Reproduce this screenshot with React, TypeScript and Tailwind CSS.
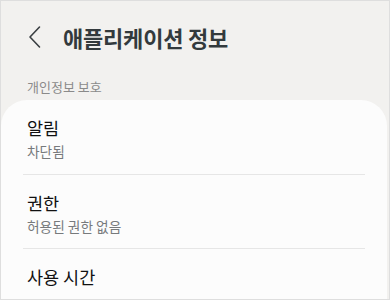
export default function App() {
  const font = { fontFamily: '"Noto Sans CJK KR", "Noto Sans", sans-serif' };
  return (
    <div style={font} className="w-[390px] h-[300px] overflow-hidden border border-[#dedede] bg-[#f2f1ef] flex flex-col">
      <div className="flex items-center h-[76px] pl-[27px] pb-[4px]">
        <svg width="14" height="24" viewBox="0 0 14 24" className="shrink-0">
          <path d="M11.5 2 L2 12 L11.5 22" fill="none" stroke="#3a3f42" strokeWidth="1.6" strokeLinecap="round" strokeLinejoin="round" />
        </svg>
        <div className="ml-[21px] text-[22px] leading-none font-semibold text-[#333a3d] tracking-[-0.2px]">애플리케이션 정보</div>
      </div>
      <div className="pl-[26px] h-[23px] text-[13px] leading-none text-[#8a8a8a] pt-[3px]">개인정보 보호</div>
      <div className="mr-[2px] flex-1 bg-[#fcfcfc] rounded-t-[26px] px-[22px]">
        <div className="h-[75px] border-b border-[#e6e6e6] pl-[4px] pt-[15px]">
          <div className="text-[17.5px] leading-[26px] text-[#111]">알림</div>
          <div className="text-[13.7px] leading-[20px] text-[#777a7c]">차단됨</div>
        </div>
        <div className="h-[74px] border-b border-[#e6e6e6] pl-[4px] pt-[15px]">
          <div className="text-[17.5px] leading-[26px] text-[#111]">권한</div>
          <div className="text-[13.7px] leading-[20px] text-[#777a7c]">허용된 권한 없음</div>
        </div>
        <div className="pl-[4px] pt-[15px]">
          <div className="text-[17.5px] leading-[26px] text-[#111]">사용 시간</div>
        </div>
      </div>
    </div>
  );
}
